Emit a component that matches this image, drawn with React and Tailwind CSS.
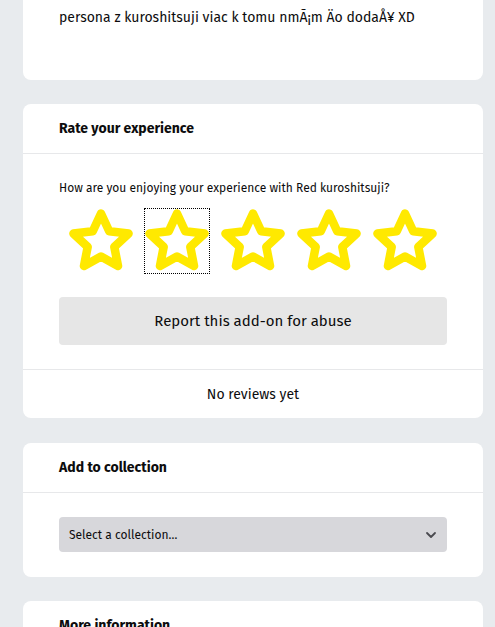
import React from 'react';

const font = { fontFamily: '"Fira Sans", "Liberation Sans", Arial, sans-serif' };

function Star() {
  return (
    <svg width="64" height="64" viewBox="0 0 64 64" fill="none" overflow="visible">
      <polygon
        points="32,4.5 40.23,22.17 59.58,24.54 45.31,37.83 49.05,56.96 32,47.5 14.95,56.96 18.69,37.83 4.42,24.54 23.77,22.17"
        stroke="#ffe900"
        strokeWidth="8.5"
        strokeLinejoin="round"
      />
    </svg>
  );
}

function CardHeader({ children }) {
  return (
    <div className="h-[50px] flex items-center px-9 border-b border-[#e7e8ea]">
      <h2 className="text-[14px] font-bold text-[#0c0c0d]">{children}</h2>
    </div>
  );
}

export default function App() {
  return (
    <div className="min-h-screen bg-[#e8ebee] pl-[23px] pr-[12px] text-[#0c0c0d]" style={font}>
      <div className="bg-white rounded-b-lg px-9 pt-2 pb-[52px]">
        <p className="text-[14px] leading-5">persona z kuroshitsuji viac k tomu nmÃ¡m Äo dodaÅ¥ XD</p>
      </div>

      <div className="bg-white rounded-lg mt-6">
        <CardHeader>Rate your experience</CardHeader>
        <div className="px-9 pt-[25px] pb-6">
          <p className="text-[12px] leading-[18px]">How are you enjoying your experience with Red kuroshitsuji?</p>
          <div className="flex justify-center gap-3 mt-3">
            {[0, 1, 2, 3, 4].map((i) => (
              <button
                key={i}
                className={i === 1 ? 'w-16 h-16 outline outline-1 outline-dotted outline-black' : 'w-16 h-16'}
              >
                <Star />
              </button>
            ))}
          </div>
          <button className="w-full h-12 mt-6 rounded bg-[#e6e6e6] text-[15px]">Report this add-on for abuse</button>
        </div>
        <div className="h-[49px] border-t border-[#e7e8ea] flex items-center justify-center text-[14px]">
          No reviews yet
        </div>
      </div>

      <div className="bg-white rounded-lg mt-[25px]">
        <CardHeader>Add to collection</CardHeader>
        <div className="px-9 pt-6 pb-[25px]">
          <div className="h-[35px] rounded bg-[#d7d7db] flex items-center justify-between pl-[10px] pr-[10px]">
            <span className="text-[12px]">Select a collection…</span>
            <svg width="12" height="12" viewBox="0 0 12 12" fill="none">
              <path d="M2 4l4 4 4-4" stroke="#4a4a4f" strokeWidth="1.8" strokeLinecap="round" strokeLinejoin="round" />
            </svg>
          </div>
        </div>
      </div>

      <div className="bg-white rounded-lg mt-6">
        <CardHeader>More information</CardHeader>
        <div className="h-40"></div>
      </div>
    </div>
  );
}
